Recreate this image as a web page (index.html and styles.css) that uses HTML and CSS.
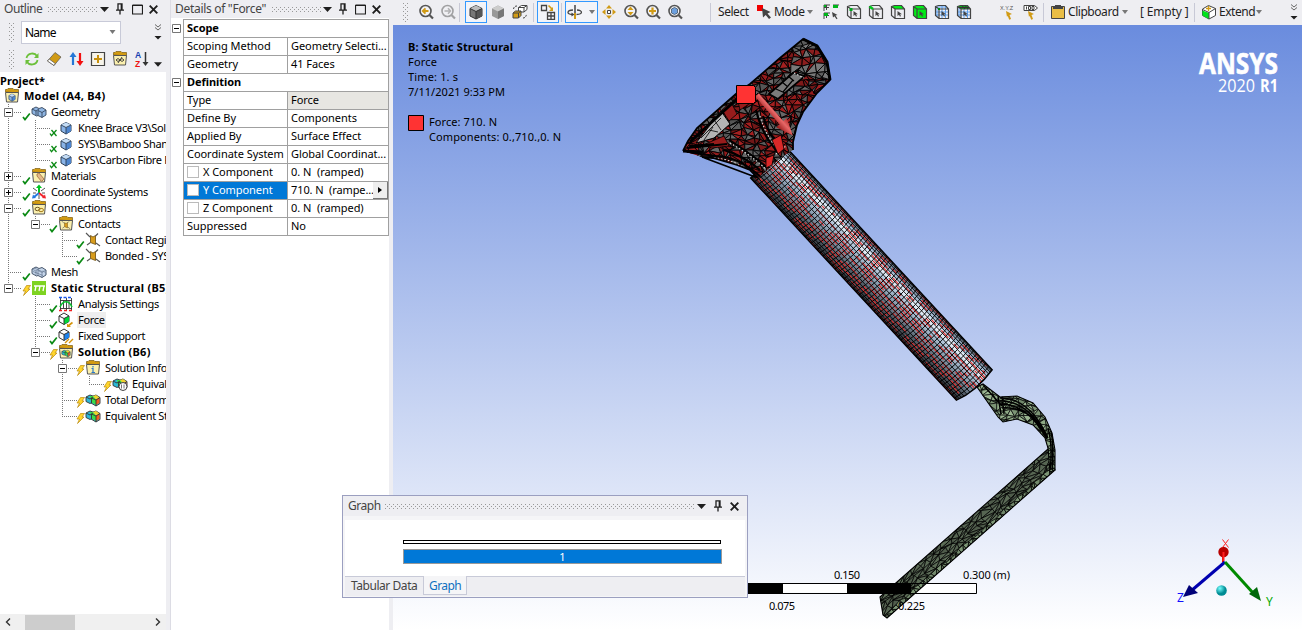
FILE: index.html
```html
<!DOCTYPE html>
<html lang="en">
<head>
<meta charset="utf-8">
<title>Mechanical - Static Structural</title>
<link rel="stylesheet" href="styles.css">
</head>
<body>
<svg class="defs" width="0" height="0">
  <defs>
    <pattern id="dots" width="4" height="4" patternUnits="userSpaceOnUse"><path d="M0 0h1v1h-1zM2 2h1v1h-1z" fill="#999"/></pattern>
    <symbol id="down" viewBox="0 0 9 5"><path d="M0 0h9L4.5 5z" fill="#1e1e1e"/></symbol>
    <symbol id="caret" viewBox="0 0 6 4"><path d="M0 0h6L3 4z" fill="#777"/></symbol>
    <symbol id="pin" viewBox="0 0 8 12"><path d="M2 7V.8h4V7M0 7.2h8M4 7.500v4M5.300 1v6" fill="none" stroke="#1e1e1e" stroke-width="1.300"/></symbol>
    <symbol id="max" viewBox="0 0 11 11"><path d="M.5 1.500h10v8.500H.5zM.5 1h10" fill="none" stroke="#1e1e1e" stroke-width="1.200"/></symbol>
    <symbol id="close" viewBox="0 0 9 9"><path d="M.7.7l7.600 7.600M8.300.7L.7 8.300" stroke="#1e1e1e" stroke-width="1.900"/></symbol>
    <symbol id="more" viewBox="0 0 8 16"><path d="M1 .5l3 2.500 3-2.500M1 3.500l3 2.500 3-2.500" fill="none" stroke="#666" stroke-width="1"/><path d="M.5 12h7l-3.500 3.500z" fill="#1e1e1e"/></symbol>
    <symbol id="minus" viewBox="0 0 9 9"><path d="M.5.5h8v8h-8z" fill="#fff" stroke="#777"/><path d="M2 4.500h5" stroke="#000"/></symbol>
    <symbol id="plus" viewBox="0 0 9 9"><path d="M.5.5h8v8h-8z" fill="#fff" stroke="#777"/><path d="M2 4.500h5M4.500 2v5" stroke="#000"/></symbol>
    <symbol id="tick" viewBox="0 0 9 9"><path d="M1 5l2 2.600L7.800 1.500" fill="none" stroke="#0b8a14" stroke-width="1.700"/></symbol>
    <symbol id="tickx" viewBox="0 0 9 9"><path d="M1 5.500l1.500 2.200L7.500 2M2.500 2l5 6M.8 4" fill="none" stroke="#0b8a14" stroke-width="1.300"/></symbol>
    <symbol id="bolt" viewBox="0 0 9 11"><path d="M4.500.5h4L6 4h2L1.500 10.500 3.500 6H1z" fill="#ffd52b" stroke="#b98a10" stroke-width=".7"/></symbol>
    <symbol id="folder" viewBox="0 0 16 16"><path d="M1.500 4V1.500H3L4 .5h5l1 1h4.500V5z" fill="#d29a10" stroke="#7a5c12" stroke-width=".7"/><path d="M1.500 4.500h13l-1 9.500h-11z" fill="#fbf0ae" stroke="#555" stroke-width="1"/></symbol>
    <symbol id="cube" viewBox="0 0 16 16"><path d="M3 5l5-2.500 5 2.500v6l-5 3-5-3z" fill="#8ab4e8" stroke="#2c3e55"/><path d="M8 8v6l5-3V5z" fill="#4d85cf"/><path d="M3 5l5-2.500L13 5 8 7.500z" fill="#c4dcf5"/><path d="M3 5l5 2.500L13 5M8 7.500V14" fill="none" stroke="#2c3e55" stroke-width=".9"/></symbol>
    <symbol id="cubes" viewBox="0 0 16 16"><path d="M1 5l4-2 3 1.500 3-1 4 2.500v5l-4 2.500-4-2-1.500.5L1 9.500z" fill="#8fb5e2" stroke="#35465c" stroke-width=".9"/><path d="M1 5l4 2 3-2M5 7v4.500M7 6.500l4 2 4-2.500M11 8.500v5M7 6.500v5" fill="none" stroke="#35465c" stroke-width=".9"/></symbol>
    <symbol id="meshi" viewBox="0 0 16 16"><path d="M1 5l4-2 3 1.500 3-1 4 2.500v5l-4 2.500-4-2-1.500.5L1 9.500z" fill="#c5d5ea" stroke="#35465c" stroke-width=".9"/><path d="M1 5l4 2 3-2M5 7v4.500M7 6.500l4 2 4-2.500M11 8.500v5M7 6.500v5M2 7.500l10 4M12 6.500l3 3M3 4l9 4" fill="none" stroke="#586a83" stroke-width=".6"/></symbol>
    <symbol id="csys" viewBox="0 0 16 16"><path d="M8 9V3" stroke="#00c322" stroke-width="2"/><path d="M5 4l3-3.500L11 4z" fill="#00c322"/><path d="M8 9l-5 4" stroke="#2479e0" stroke-width="2"/><path d="M1 14.500l1-4 3 3.500z" fill="#2479e0"/><path d="M8 9l5 4" stroke="#f0242c" stroke-width="2"/><path d="M15 14.500l-1-4-3 3.500z" fill="#f0242c"/><path d="M2 4l4 3M14 4l-4 3M2 9h3M11 9h3M8 11v4" stroke="#555" stroke-width="1"/></symbol>
    <symbol id="contact" viewBox="0 0 16 16"><path d="M5.500 3.500L8 5l2.500-1.500v9L8 11.500l-2.500-1z" fill="#d89c1c" stroke="#6b4b0c" stroke-width=".8"/><path d="M1 1l4 4M15 14l-4-3M13 1.500l-2.500 2.500M5.500 10.500l-3.500 2.500" stroke="#555" stroke-width="1.100"/></symbol>
    <symbol id="static" viewBox="0 0 16 16"><path d="M1 1h14v14H1z" fill="#7ed321"/><path d="M3 6h11M4 11l1-5M8 11l1-5M12 11l1-5" stroke="#fff" stroke-width="1.300" fill="none"/></symbol>
    <symbol id="settings" viewBox="0 0 16 16"><path d="M2.500 2v12M8.500 2v12M13.500 2v12M2 4.500h12M2 12.500h12M5.500 4v8M11 4v8" stroke="#333" stroke-width=".9"/><path d="M2 11c3-7 9-7 12 0" fill="none" stroke="#06bf2b" stroke-width="1.500"/><path d="M1 1.500h13" stroke="#1657f0" stroke-width="1.500" stroke-dasharray="3 1.500"/><path d="M1 14.500h13" stroke="#f02020" stroke-width="1.500" stroke-dasharray="3 2"/></symbol>
    <symbol id="forcei" viewBox="0 0 16 16"><path d="M1 4l5-3 5 3v5.500l-5 3-5-3z" fill="#fff" stroke="#333"/><path d="M6 6.500L11 4v5.500l-5 3z" fill="#00d936"/><path d="M1 4l5 2.500L11 4M6 6.500v6" fill="none" stroke="#333"/><path d="M14.500 10.500L10 14" stroke="#d5950b" stroke-width="1.600"/><path d="M9 11.500V15h4z" fill="#d5950b"/></symbol>
    <symbol id="support" viewBox="0 0 16 16"><path d="M1 4l5-3 5 3v5.500l-5 3-5-3z" fill="#fff" stroke="#333"/><path d="M6 6.500L11 4v5.500l-5 3z" fill="#1d83ee"/><path d="M1 4l5 2.500L11 4M6 6.500v6" fill="none" stroke="#333"/><path d="M7 15l4-4M11 15l4-4" stroke="#d5950b" stroke-width="1.400"/></symbol>
    <symbol id="result" viewBox="0 0 16 16"><path d="M1 5l4-2 3 1 3-1 4 2.500v6l-4 2.500-5-3-1 .5-4-2z" fill="#2bb8d8" stroke="#333" stroke-width=".9"/><path d="M5 4h4l2 4v5l-5-3z" fill="#3bdd46"/><path d="M11 7l3.500-1.500v5.500L11 13z" fill="#f35b20"/><path d="M8 4l3-1 3.500 2.500L11 7.500z" fill="#f2d12b"/><path d="M1 5l4 2 3-2M6.500 6l4.500 2 4-2.500M11 8v6M6.500 6v5" fill="none" stroke="#333" stroke-width=".9"/></symbol>
    <symbol id="glass" viewBox="0 0 16 16"><circle cx="7.500" cy="7" r="5.500" fill="#f3f3f6" stroke="#555" stroke-width="1.600"/><path d="M11.500 11l3.500 3.500" stroke="#555" stroke-width="2.200"/></symbol>
    <symbol id="selcube" viewBox="0 0 16 16"><path d="M1.500 2.500L4.500 1.500h7L14.500 5v9.500H5L1.500 11.500zM1.500 2.500L5 5h9.500M5 5v9.500" fill="none" stroke="#444" stroke-width="1.200"/><path d="M7.500 7v5l1.500-1.300 1 2 1-.7-1-1.700h2z" fill="#444"/></symbol>
    <radialGradient id="cy" cx=".35" cy=".3"><stop offset="0" stop-color="#7ff"/><stop offset="1" stop-color="#008c94"/></radialGradient>
    <linearGradient id="tube" x1="0" y1="0" x2="0" y2="1"><stop offset="0" stop-color="#59636e"/><stop offset=".15" stop-color="#a3bbd4"/><stop offset=".25" stop-color="#f4f9ff"/><stop offset=".36" stop-color="#b4c8dc"/><stop offset=".6" stop-color="#8092a4"/><stop offset=".8" stop-color="#4f5963"/><stop offset="1" stop-color="#2c3035"/></linearGradient>
    <linearGradient id="arrow" x1="0" y1="0" x2="0" y2="1"><stop offset="0" stop-color="#b02626"/><stop offset=".4" stop-color="#e86868"/><stop offset="1" stop-color="#8e1010"/></linearGradient>
    <clipPath id="braceClip"><path d="M683 151l5-10 9-13 40-35 13-9 30-26 23-19 14 7 10 16 3 18-13 13-14 19-6 13-4 17v8l-10 6-25 22-8-8-13-5-24-7-11-1z"/></clipPath>
    <clipPath id="footClip"><path d="M880 597L1048 449 1055 470 887 618 883 615z"/></clipPath>
    <clipPath id="hookClip"><path d="M977 387l6-3 17 13 17-1 16 7 12 14 7 16 3 17v20l-5 2-2-24-3-10-12-13-16-6-14 3-5-5z"/></clipPath>
  </defs>
</svg>

<div class="app">
  <section class="outline">
    <header class="title">
      <span class="title-text outline-name">Outline</span>
      <svg class="dots"><rect width="100%" height="5" fill="url(#dots)"/></svg>
      <svg class="i-down"><use href="#down"/></svg><svg class="i-pin"><use href="#pin"/></svg><svg class="i-max"><use href="#max"/></svg><svg class="i-close"><use href="#close"/></svg>
    </header>
    <div class="filter">
      <svg class="vgrip"><rect width="5" height="19" fill="url(#dots)"/></svg>
      <div class="combo"><span>Name</span><svg class="combo-caret"><use href="#caret"/></svg></div>
      <svg class="i-more"><use href="#more"/></svg>
    </div>
    <div class="tools">
      <svg class="vgrip"><rect width="5" height="19" fill="url(#dots)"/></svg>
      <svg class="ic t1" viewBox="0 0 16 16"><path d="M2.500 7c1-5 8-6 10.500-2M13.500 9c-1 5-8 6-10.500 2" fill="none" stroke="#6cc03a" stroke-width="1.800"/><path d="M14.500 2v5H10zM1.500 14V9H6z" fill="#6cc03a"/></svg>
      <svg class="ic" viewBox="0 0 16 16"><path d="M9 1.500l6 4.500-7 8.500L1.500 10z" fill="#d19b16" stroke="#555" stroke-width=".7"/><path d="M3.200 8l6 4.500-1.200 2L1.500 10z" fill="#fff" stroke="#555" stroke-width=".7"/></svg>
      <svg class="ic" viewBox="0 0 16 16"><path d="M5 14V4" stroke="#2577d6" stroke-width="2.200"/><path d="M1.500 6L5 1l3.500 5z" fill="#2577d6"/><path d="M12 2v10" stroke="#f21010" stroke-width="2.200"/><path d="M8.500 10l3.500 5 3.500-5z" fill="#f21010"/></svg>
      <svg class="ic" viewBox="0 0 16 16"><path d="M1.500 1.500h13v13h-13z" fill="#f7f4ea" stroke="#444" stroke-width="1.200"/><path d="M8 4v8M4 8h8" stroke="#c8900c" stroke-width="2"/></svg>
      <svg class="ic" viewBox="0 0 16 16"><use href="#folder"/><path d="M4 9q2-3 4 0 2-3 4 0-2 3-4 0-2 3-4 0M6 12l4-6" fill="none" stroke="#333" stroke-width=".9"/></svg>
      <svg class="ic" viewBox="0 0 16 16"><text x="1" y="7" class="az" fill="#173fb0">A</text><text x="1" y="15.500" class="az" fill="#ee1111">Z</text><path d="M11.500 1v11" stroke="#333" stroke-width="1.500"/><path d="M8.500 11h6l-3 4z" fill="#333"/></svg>
      <svg class="tool-caret"><use href="#down"/></svg>
    </div>
    <div class="tree">
      <svg class="lines" width="166" height="358"><path d="M8.500 32V216M8 40.500H22M8 104.500H22M8 120.500H22M8 136.500H22M8 200.500H22M8 216.500H22M35.500 48V88M35 56.500H50M35 72.500H50M35 88.500H50M35.500 144V152M35 152.500H50M62.500 160V184M62 168.500H77M62 184.500H77M35.500 224V280M35 232.500H50M35 248.500H50M35 264.500H50M35 280.500H50M62.500 288V344M62 296.500H77M62 328.500H77M62 344.500H77M89.500 304V312M89 312.500H104" fill="none" stroke="#777" stroke-dasharray="1 1"/></svg>
      <div class="row root bold">Project*</div>
      <div class="row model bold"><svg class="ic" viewBox="0 0 16 16"><use href="#folder"/><svg x="3" y="4.500" width="10" height="10"><use href="#cube"/></svg></svg><span>Model (A4, B4)</span></div>
      <div class="row"><svg class="ex"><use href="#minus"/></svg><svg class="mk"><use href="#tick"/></svg><svg class="ic"><use href="#cubes"/></svg><span>Geometry</span></div>
      <div class="row d2"><i class="ex"></i><svg class="mk"><use href="#tickx"/></svg><svg class="ic"><use href="#cube"/></svg><span>Knee Brace V3\Solid</span></div>
      <div class="row d2"><i class="ex"></i><svg class="mk"><use href="#tickx"/></svg><svg class="ic"><use href="#cube"/></svg><span>SYS\Bamboo Shank</span></div>
      <div class="row d2"><i class="ex"></i><svg class="mk"><use href="#tickx"/></svg><svg class="ic"><use href="#cube"/></svg><span>SYS\Carbon Fibre F</span></div>
      <div class="row"><svg class="ex"><use href="#plus"/></svg><svg class="mk"><use href="#tick"/></svg><svg class="ic" viewBox="0 0 16 16"><use href="#folder"/><path d="M6 6l2-1 5 6-2.500 2.500L6 8z" fill="#e3b98b" stroke="#a06d3c" stroke-width=".8"/></svg><span>Materials</span></div>
      <div class="row"><svg class="ex"><use href="#plus"/></svg><svg class="mk"><use href="#tick"/></svg><svg class="ic"><use href="#csys"/></svg><span>Coordinate Systems</span></div>
      <div class="row"><svg class="ex"><use href="#minus"/></svg><svg class="mk"><use href="#tick"/></svg><svg class="ic" viewBox="0 0 16 16"><use href="#folder"/><ellipse cx="6.500" cy="9" rx="2.500" ry="1.700" fill="none" stroke="#6b5420"/><ellipse cx="10" cy="10" rx="2.500" ry="1.700" fill="none" stroke="#a77d1c"/></svg><span>Connections</span></div>
      <div class="row d2"><svg class="ex"><use href="#minus"/></svg><svg class="mk"><use href="#tick"/></svg><svg class="ic" viewBox="0 0 16 16"><use href="#folder"/><svg x="3" y="4.500" width="10" height="9.500"><use href="#contact"/></svg></svg><span>Contacts</span></div>
      <div class="row d3"><i class="ex"></i><svg class="mk"><use href="#tick"/></svg><svg class="ic"><use href="#contact"/></svg><span>Contact Region</span></div>
      <div class="row d3"><i class="ex"></i><svg class="mk"><use href="#tick"/></svg><svg class="ic"><use href="#contact"/></svg><span>Bonded - SYS\</span></div>
      <div class="row"><i class="ex"></i><svg class="mk"><use href="#tick"/></svg><svg class="ic"><use href="#meshi"/></svg><span>Mesh</span></div>
      <div class="row bold"><svg class="ex"><use href="#minus"/></svg><svg class="mk b"><use href="#bolt"/></svg><svg class="ic"><use href="#static"/></svg><span>Static Structural (B5)</span></div>
      <div class="row d2"><i class="ex"></i><svg class="mk"><use href="#tick"/></svg><svg class="ic"><use href="#settings"/></svg><span>Analysis Settings</span></div>
      <div class="row d2"><i class="ex"></i><svg class="mk"><use href="#tick"/></svg><svg class="ic"><use href="#forcei"/></svg><span class="picked">Force</span></div>
      <div class="row d2"><i class="ex"></i><svg class="mk"><use href="#tick"/></svg><svg class="ic"><use href="#support"/></svg><span>Fixed Support</span></div>
      <div class="row d2 bold"><svg class="ex"><use href="#minus"/></svg><svg class="mk b"><use href="#bolt"/></svg><svg class="ic" viewBox="0 0 16 16"><use href="#folder"/><svg x="3" y="4.500" width="10" height="9.500"><use href="#result"/></svg></svg><span>Solution (B6)</span></div>
      <div class="row d3"><svg class="ex"><use href="#minus"/></svg><svg class="mk b"><use href="#bolt"/></svg><svg class="ic" viewBox="0 0 16 16"><use href="#folder"/><path d="M8 6v1.500M6.500 8.500H8V12M6.500 12.500h3.500" fill="none" stroke="#2a78c8" stroke-width="1.200"/></svg><span>Solution Information</span></div>
      <div class="row d4"><i class="ex"></i><svg class="mk b"><use href="#bolt"/></svg><svg class="ic" viewBox="0 0 16 16"><use href="#result"/><circle cx="11" cy="10.500" r="4" fill="#fff" stroke="#444"/><path d="M9.500 8.500v4M12 8.500v4" stroke="#777"/></svg><span>Equivalent</span></div>
      <div class="row d3"><i class="ex"></i><svg class="mk b"><use href="#bolt"/></svg><svg class="ic"><use href="#result"/></svg><span>Total Deformation</span></div>
      <div class="row d3"><i class="ex"></i><svg class="mk b"><use href="#bolt"/></svg><svg class="ic"><use href="#result"/></svg><span>Equivalent Stress</span></div>
    </div>
    <div class="scroll"><svg class="sa" viewBox="0 0 6 8"><path d="M5 .5L1.500 4 5 7.500" fill="none" stroke="#333" stroke-width="1.400"/></svg><div class="thumb"></div><svg class="sa end" viewBox="0 0 6 8"><path d="M1 .5L4.500 4 1 7.500" fill="none" stroke="#333" stroke-width="1.400"/></svg></div>
  </section>

  <section class="details">
    <header class="title">
      <span class="title-text details-name">Details of "Force"</span>
      <svg class="dots"><rect width="100%" height="5" fill="url(#dots)"/></svg>
      <svg class="i-down"><use href="#down"/></svg><svg class="i-pin"><use href="#pin"/></svg><svg class="i-max"><use href="#max"/></svg><svg class="i-close"><use href="#close"/></svg>
    </header>
    <div class="props">
      <div class="marks"><svg class="ex"><use href="#minus"/></svg><svg class="ex second"><use href="#minus"/></svg></div>
      <div class="table">
        <div class="cell head">Scope</div>
        <div class="cell">Scoping Method</div><div class="cell">Geometry Selecti...</div>
        <div class="cell">Geometry</div><div class="cell">41 Faces</div>
        <div class="cell head">Definition</div>
        <div class="cell">Type</div><div class="cell ro">Force</div>
        <div class="cell">Define By</div><div class="cell">Components</div>
        <div class="cell">Applied By</div><div class="cell">Surface Effect</div>
        <div class="cell">Coordinate System</div><div class="cell">Global Coordinat...</div>
        <div class="cell"><b class="check"></b>X Component</div><div class="cell">0. N&nbsp; (ramped)</div>
        <div class="cell active"><b class="check"></b>Y Component</div><div class="cell tight">710. N&nbsp; (rampe...<span class="flyout"><svg viewBox="0 0 4 6"><path d="M0 0l4 3-4 3z"/></svg></span></div>
        <div class="cell"><b class="check"></b>Z Component</div><div class="cell">0. N&nbsp; (ramped)</div>
        <div class="cell">Suppressed</div><div class="cell">No</div>
      </div>
    </div>
  </section>

  <main class="work">
    <nav class="bar">
      <svg class="vgrip m10"><rect width="5" height="19" fill="url(#dots)"/></svg>
      <svg class="ic m10" viewBox="0 0 16 16"><use href="#glass"/><path d="M4.500 7h6M7.500 4.300L4.800 7l2.700 2.700" fill="none" stroke="#d19b16" stroke-width="1.900"/></svg>
      <svg class="ic m6 dim" viewBox="0 0 16 16"><use href="#glass"/><path d="M4.500 7h6M8 4.300L10.500 7 8 9.700" fill="none" stroke="#777" stroke-width="1.500"/></svg>
      <i class="sep m3"></i>
      <span class="tog m5"><svg class="ic" viewBox="0 0 16 16"><path d="M2 4.500l6-3 6 3v7.500l-6 3-6-3z" fill="#777" stroke="#333"/><path d="M2 4.500l6-3 6 3-6 3z" fill="#bbb"/><path d="M8 7.500v7.500l6-3V4.500z" fill="#555"/><path d="M2 4.500l6 3 6-3M8 7.500V15" fill="none" stroke="#333"/></svg></span>
      <svg class="ic m3" viewBox="0 0 16 16"><path d="M2 4.500l6-3 6 3v7.500l-6 3-6-3z" fill="#999"/><path d="M2 4.500l6-3 6 3-6 3z" fill="#ccc"/><path d="M8 7.500v7.500l6-3V4.500z" fill="#777"/></svg>
      <svg class="ic m6" viewBox="0 0 16 16"><path d="M6.500 3.500l3-2H15v4l-3 2.500H6.500zM6.500 3.500H12V8M12 3.500l3-2" fill="#fff" stroke="#444"/><path d="M1 9l2.500-2H9v4.500L6.500 14H1z" fill="#d19b16" stroke="#444"/><path d="M1 9h5.500v5M6.500 9L9 7" fill="none" stroke="#444"/><path d="M1.500 5Q2 2 5 2M11 14q3 0 3.500-4" fill="none" stroke="#444" stroke-dasharray="2 1"/></svg>
      <i class="sep m5"></i>
      <span class="tog m3"><svg class="ic" viewBox="0 0 16 16"><path d="M1.500 1.500h5v5h-5zM7.500 8.500h7v7h-7zM11 8.500v7M7.500 12h7" fill="none" stroke="#444" stroke-width="1.300"/><path d="M8.500 1.500L12 5" stroke="#d19b16" stroke-width="1.600"/><path d="M13 3v4H9z" fill="#d19b16"/></svg></span>
      <i class="sep m2"></i>
      <span class="tog wide m3"><svg class="ic" viewBox="0 0 16 16"><path d="M10 6c6 .2 6 4.200-.5 4.500M6 6c-6.500.2-6.500 4.200-1 4.500" fill="none" stroke="#444" stroke-width="1.300"/><path d="M8 1v8" stroke="#444" stroke-width="1.500"/><path d="M8 9v6" stroke="#d19b16" stroke-width="2"/><path d="M4.500 8.500l3 2-3 2z" fill="#444"/></svg><svg class="caret"><use href="#caret"/></svg></span>
      <svg class="ic m3" viewBox="0 0 16 16"><path d="M8 1l3 3.500H5zM8 15l3-3.500H5zM1 8l3.500-3v6zM15 8l-3.500-3v6z" fill="#d19b16"/><path d="M6.500 6.500h3v3h-3z" fill="#fff" stroke="#444"/></svg>
      <svg class="ic m6" viewBox="0 0 16 16"><use href="#glass"/><path d="M7.500 2.500l3 3.500h-6zM7.500 11.500l3-3.500h-6z" fill="#d19b16"/></svg>
      <svg class="ic m6" viewBox="0 0 16 16"><use href="#glass"/><path d="M7.500 3.500v7M4 7h7" stroke="#d19b16" stroke-width="2.200"/></svg>
      <svg class="ic m6" viewBox="0 0 16 16"><use href="#glass"/><path d="M4.500 5l3-1.500 3 1.500v4l-3 1.500-3-1.500z" fill="#6da0df" stroke="#456" stroke-width=".8"/></svg>
      <i class="sep m27"></i>
      <span class="lab m7 w32">Select</span>
      <svg class="ic m6" viewBox="0 0 16 16"><path d="M1 1h6v6H1z" fill="#f10000"/><path d="M6 4l8.500 4-3 1.500 3.500 4-2 1.500-3.300-4L7 13.500z" fill="#444"/></svg>
      <span class="lab m2 w32">Mode</span><svg class="caret m1"><use href="#caret"/></svg>
      <svg class="ic m10" viewBox="0 0 16 16"><path d="M1 7V1h6M1 3.500h5M3.500 1v5M10 1h6M10 3.500h5M1 15V9h6M1 11.500h5M3.500 9v5" fill="none" stroke="#444"/><path d="M1 1h2v2H1zM10 1h5v3h-5zM1 9h4v3H1z" fill="#00b51a"/><path d="M9 8l5.500 3-2 .5 2 3-1 .7-2-3L10 13.500z" fill="#444"/></svg>
      <svg class="ic m7" viewBox="0 0 16 16"><use href="#selcube"/><path d="M3.500 4h3v3h-3z" fill="#00a81c"/></svg>
      <svg class="ic m6" viewBox="0 0 16 16"><use href="#selcube"/><path d="M1.500 2.500L5 5" stroke="#00c81d" stroke-width="2.500"/></svg>
      <svg class="ic m6" viewBox="0 0 16 16"><path d="M1.500 2.500l3-1h7L14.500 5H5z" fill="#00ed16"/><use href="#selcube"/></svg>
      <svg class="ic m6" viewBox="0 0 16 16"><path d="M1.500 2.500l3-1h7L14.500 5v9.500H5l-3.500-3z" fill="#00ed16"/><use href="#selcube"/></svg>
      <svg class="ic m6" viewBox="0 0 16 16"><path d="M2 8h13M2 11h13M4 3h9M8 1v14M11.500 1v14M3 2v11" stroke="#5da0f0"/><use href="#selcube"/><path d="M4 4h2v2H4z" fill="#008c10"/></svg>
      <svg class="ic m6" viewBox="0 0 16 16"><path d="M2 8h13M2 11h13M8 5v10M11.500 5v10M3 3v10" stroke="#5da0f0"/><path d="M1.500 2.500l3-1h7L14.500 5H5z" fill="#08ad1b"/><use href="#selcube"/><path d="M6 1.500L9 5M9 1.500L12 5M3 3.500h10" stroke="#333"/></svg>
      <svg class="ic m28" viewBox="0 0 16 16"><text x="0" y="6" class="xyz">X.Y.Z</text><path d="M6 7l6 3-2.500 1 1.500 4-1.800.7-1.500-4L7 13z" fill="#d19b16"/></svg>
      <svg class="ic m7" viewBox="0 0 16 16"><path d="M1 1.500h10.500L14.500 4l-3 2.500H1zM3.500 2.500v3M5.500 2.500h2v3h-2zM9 2.500h2v3H9z" fill="#fff" stroke="#444"/><path d="M5 7l6 3-2.500 1 1.500 4-1.800.7-1.500-4L6 13z" fill="#d19b16"/></svg>
      <i class="sep m4"></i>
      <svg class="ic m6" viewBox="0 0 16 16"><path d="M1.500 2.500h13v12h-13z" fill="#e9bd45" stroke="#444"/><path d="M5 1h6v1.500h2V5H3V2.500h2z" fill="#444"/></svg>
      <span class="lab m2 w53">Clipboard</span><svg class="caret m1"><use href="#caret"/></svg>
      <span class="lab empty m12 w48">[ Empty ]</span>
      <i class="sep m6"></i>
      <svg class="ic m6" viewBox="0 0 16 16"><path d="M1.500 5l6-3.500 7 3v7L8 15l-6.500-3.500z" fill="#fff" stroke="#444"/><path d="M1.500 6.500L8 9v6l-6.500-3.500z" fill="#00e31a"/><path d="M1.500 5.500L8 8.500l6.500-4M8 8.500V15" fill="none" stroke="#444"/><path d="M7.500 2v5M5 4.500h5" stroke="#d19b16" stroke-width="1.300"/></svg>
      <span class="lab m2 w36">Extend</span><svg class="caret m1"><use href="#caret"/></svg>
      <svg class="i-more m28"><use href="#more"/></svg>
    </nav>
    <svg class="view" viewBox="393 25 909 605">
      <g class="note">
        <text x="408" y="51" class="strong" textLength="105">B: Static Structural</text>
        <text x="408" y="66" textLength="29">Force</text>
        <text x="408" y="81" textLength="50">Time: 1. s</text>
        <text x="408" y="96" textLength="97">7/11/2021 9:33 PM</text>
        <text x="429" y="126" textLength="68">Force: 710. N</text>
        <text x="429" y="141" textLength="132">Components: 0.,710.,0. N</text>
      </g>
      <path d="M408.500 115.500h15v15h-15z" fill="#ff3333" stroke="#000"/>
      <text x="1199" y="74" class="brand" textLength="79" lengthAdjust="spacingAndGlyphs">ANSYS</text>
      <text x="1218" y="92" class="release" textLength="37" lengthAdjust="spacingAndGlyphs">2020</text>
      <text x="1260" y="92" class="release heavy" textLength="18" lengthAdjust="spacingAndGlyphs">R1</text>
      <path d="M783 583.500h64v9h-64zM911 583.500h65.500v9H911z" fill="#fff"/>
      <g id="model"></g>
      <path d="M740 583h43v11h-43zM847 583h64v11h-64z"/>
      <path d="M911 583.500h65.500v10H911M783 583.500h64M783 593.500h64" fill="none" stroke="#000"/>
      <g class="note">
        <text x="834" y="579" textLength="26">0.150</text><text x="963" y="579" textLength="47">0.300 (m)</text>
        <text x="769" y="610" textLength="26">0.075</text><text x="898" y="610" textLength="27">0.225</text>
      </g>
      <path d="M1223 547v15" stroke="#e00" stroke-width="2"/><circle cx="1223.500" cy="552" r="5.200" fill="#b80000"/><path d="M1223.500 552v9" stroke="#f22" stroke-width="2"/>
      <path d="M1225 562l-34 29" stroke="#0000b0" stroke-width="3"/><path d="M1183 597l6-12 9 8z" fill="#000078"/>
      <path d="M1225 562l29 32" stroke="#008a00" stroke-width="3"/><path d="M1261 601l-12-7 8-7z" fill="#00680a"/>
      <circle cx="1221.500" cy="590.500" r="5.300" fill="url(#cy)"/>
      <path d="M1222.500 539.500l6 8M1228.500 539.500l-6 8" stroke="#f22"/>
      <g class="axis"><text x="1177" y="602" fill="#11f">Z</text><text x="1266" y="606" fill="#0a0">Y</text></g>
    </svg>
  </main>

  <aside class="graph">
    <header class="title">
      <span class="title-text graph-name">Graph</span>
      <svg class="dots"><rect width="100%" height="5" fill="url(#dots)"/></svg>
      <svg class="i-down"><use href="#down"/></svg><svg class="i-pin"><use href="#pin"/></svg><svg class="i-close"><use href="#close"/></svg>
    </header>
    <div class="plot"><div class="track"></div><div class="step">1</div></div>
    <div class="tabs"><span class="tab">Tabular Data</span><span class="tab on">Graph</span></div>
  </aside>
</div>
<script src="model.js"></script>
</body>
</html>
```
FILE: styles.css
```css
* { box-sizing: border-box; }
body { margin: 0; width: 1302px; height: 630px; overflow: hidden; background: #eeeef2; font-family: "Noto Sans", "Open Sans", sans-serif; font-size: 11px; color: #000; }
svg { display: block; flex: none; }
.defs { position: absolute; }
.app { display: flex; width: 1302px; height: 630px; }
.outline { display: flex; flex-direction: column; width: 166px; overflow: hidden; flex: none; }
.details { width: 219px; margin-left: 4px; background: #fff; flex: none; border-left: 1px solid #dcdce4; }
.work { width: 909px; margin-left: 4px; display: flex; flex-direction: column; flex: none; }

.title { display: flex; align-items: center; height: 18px; background: #eeeef2; color: #444; font-size: 12px; flex: none; white-space: nowrap; }
.title-text { flex: none; height: 17px; line-height: 16px; }
.outline-name { width: 44px; padding-left: 4px; letter-spacing: -.45px; }
.details-name { width: 97px; padding-left: 4px; letter-spacing: -.3px; }
.dots { flex: 1; min-width: 0; height: 5px; margin-left: 4px; }
.i-down { width: 9px; height: 5px; margin-left: 2px; }
.i-pin { width: 8px; height: 12px; margin-left: 7px; }
.i-max { width: 11px; height: 11px; margin-left: 8px; }
.i-close { width: 9px; height: 9px; margin: 0 8px 0 6px; }
.i-more { width: 8px; height: 16px; }
.vgrip { width: 5px; height: 19px; }
.ic { width: 16px; height: 16px; }

.filter { display: flex; align-items: center; height: 28px; padding-left: 9px; flex: none; }
.combo { display: flex; align-items: center; justify-content: space-between; width: 100px; height: 23px; margin: 0 33px 0 7px; padding: 0 4px 0 3px; background: #fff; border: 1px solid #c8cad8; font-size: 12px; letter-spacing: -.8px; }
.combo-caret { width: 7px; height: 4px; }
.tools { display: flex; align-items: center; height: 26px; padding-left: 9px; gap: 6px; flex: none; }
.t1 { margin-left: 4px; }
.tool-caret { width: 8px; height: 5px; margin: 11px 0 0 -2px; }
.az { font: bold 8.500px "Liberation Sans", sans-serif; }

.tree { position: relative; flex: 1; background: #fff; letter-spacing: -.33px; }
.lines { position: absolute; left: 0; top: 0; }
.row { position: relative; display: flex; align-items: center; height: 16px; padding-left: 4px; white-space: nowrap; }
.bold { font-weight: bold; letter-spacing: .25px; }
.root { padding-left: 0; letter-spacing: .05px; }
.row .ic + span { margin-left: 3px; height: 16px; line-height: 16px; padding: 0 1px; }
.d2 { padding-left: 31px; }
.d3 { padding-left: 58px; }
.d4 { padding-left: 85px; }
.ex { width: 9px; height: 9px; flex: none; }
.mk { width: 9px; height: 9px; margin: 8px 0 0 9px; }
.b { height: 11px; margin-top: 5px; }
.row .picked { background: #eee; }
.scroll { display: flex; align-items: center; height: 16px; background: #f0f0f0; padding: 0 5px; flex: none; }
.sa { width: 6px; height: 8px; }
.end { margin-left: auto; }
.thumb { width: 50px; height: 15px; margin-left: 14px; background: #cdcdcd; }

.props { display: flex; padding: 1px 0 0 1px; }
.marks { width: 11px; padding-top: 5px; }
.second { margin-top: 45px; }
.table { display: grid; grid-template-columns: 104px 101px; border: solid #a0a0a0; border-width: 1px 0 0 1px; }
.cell { display: flex; align-items: center; position: relative; height: 18px; padding: 0 0 2px 3px; border: solid #a0a0a0; border-width: 0 1px 1px 0; white-space: nowrap; overflow: hidden; letter-spacing: -.05px; }
.tight { letter-spacing: -.1px; }
.head { grid-column: span 2; font-weight: bold; }
.ro { background: #e7e6e2; }
.check { width: 12px; height: 12px; margin: 1px 4px 0 0; border: 1px solid #bbb; background: #fff; }
.active { background: #0078d7; color: #fff; }
.flyout { position: absolute; right: 0; top: 0; display: flex; align-items: center; justify-content: center; width: 15px; height: 17px; background: #eee; border: solid #777; border-width: 0 1px 1px 0; }
.flyout svg { width: 4px; height: 6px; }

.bar { display: flex; align-items: center; height: 25px; padding-bottom: 1px; background: #eeeef2; font-size: 12px; flex: none; }
.dim { opacity: .5; }
.sep { width: 1px; height: 19px; background: #c8c9d6; flex: none; }
.tog { display: flex; align-items: center; justify-content: center; width: 22px; height: 22px; border: 1px solid #3399ff; background: #f3f4f8; flex: none; }
.wide { width: 33px; justify-content: space-between; padding: 0 2px 0 1px; }
.caret { width: 6px; height: 4px; }
.lab { flex: none; white-space: nowrap; letter-spacing: -.45px; line-height: 16px; color: #1e1e1e; }
.empty { letter-spacing: -.15px; }
.w32 { width: 32px; } .w36 { width: 36px; } .w48 { width: 48px; } .w53 { width: 53px; }
.m1 { margin-left: 1px; } .m2 { margin-left: 2px; } .m3 { margin-left: 3px; } .m4 { margin-left: 4px; } .m5 { margin-left: 5px; }
.m6 { margin-left: 6px; } .m7 { margin-left: 7px; } .m10 { margin-left: 10px; } .m12 { margin-left: 12px; }
.m27 { margin-left: 27px; } .m28 { margin-left: 28px; }
.xyz { font: 5.500px "Liberation Sans", sans-serif; fill: #555; }

.view { width: 909px; height: 605px; background: linear-gradient(#6a8cde, #fff); }
.note { font-size: 11px; }
.strong { font-weight: bold; }
.brand { font: bold 29px "Open Sans", sans-serif; fill: #fff; stroke: #fff; stroke-width: .6px; }
.release { font: 18px "Open Sans", sans-serif; fill: #fff; }
.heavy { font-weight: bold; }
.axis { font: 12px "Noto Sans", sans-serif; }

.graph { position: absolute; left: 342px; top: 495px; width: 406px; height: 103px; padding: 0 2px 2px; border: 1px solid #9b9fc0; background: #f5f5f7; }
.graph .title { height: 20px; margin: 0 -2px; }
.graph-name { width: 38px; padding-left: 5px; letter-spacing: -.45px; }
.graph .i-close { margin-left: 8px; }
.graph .i-down { margin-left: 3px; }
.graph .i-pin { margin-left: 8px; }
.plot { height: 56px; margin-top: 4px; padding: 20px 23px 0 58px; background: #fff; }
.track { height: 4px; border: 1px solid #000; width: 318px; }
.step { width: 319px; height: 15px; margin-top: 5px; border: 1px solid #999; background: #0078d7; color: #fff; line-height: 13px; text-align: center; }
.tabs { display: flex; height: 20px; border-top: 1px solid #c8cad8; background: #eeeef2; font-size: 12px; line-height: 17px; color: #444; }
.tab { width: 78px; padding-left: 6px; letter-spacing: -.45px; white-space: nowrap; }
.on { width: 44px; height: 19px; margin-top: -1px; padding: 1px 0 0 5px; border: solid #c8cad8; border-width: 0 1px 1px; background: #f5f5f7; color: #0e70c0; letter-spacing: -.55px; }
```
FILE: model.js
```js
// Builds the finite element mesh drawn in the graphics window.
const NS = "http://www.w3.org/2000/svg";
const model = document.getElementById("model");
let seed = 7;
function rnd() {
  seed = (seed * 16807) % 2147483647;
  return seed / 2147483647;
}
function add(parent, tag, attrs) {
  const el = document.createElementNS(NS, tag);
  for (const k in attrs) el.setAttribute(k, attrs[k]);
  parent.appendChild(el);
  return el;
}

// Jittered triangle mesh over a rectangle; a clip path trims it to the part.
function triangles(parent, w, h, sx, sy, jitter, pick, line) {
  const pts = [];
  for (let y = 0; y <= h; y += sy) {
    const r = [];
    for (let x = 0; x <= w; x += sx) r.push([x + (rnd() - .5) * sx * jitter, y + (rnd() - .5) * sy * jitter]);
    pts.push(r);
  }
  for (let j = 0; j < pts.length - 1; j++) {
    for (let i = 0; i < pts[j].length - 1; i++) {
      const a = pts[j][i], b = pts[j][i + 1], c = pts[j + 1][i + 1], d = pts[j + 1][i];
      const pair = rnd() > .5 ? [[a, b, c], [a, c, d]] : [[a, b, d], [b, c, d]];
      pair.forEach(t => add(parent, "path", {
        d: "M" + t.map(p => p[0].toFixed(1) + " " + p[1].toFixed(1)).join("L") + "z",
        fill: pick(), stroke: "#000", "stroke-width": line
      }));
    }
  }
}
const from = list => () => list[Math.floor(rnd() * list.length)];

// Foot plate
const foot = add(model, "g", { "clip-path": "url(#footClip)" });
const plate = add(foot, "g", { transform: "translate(862 606) rotate(-41.4)" });
triangles(plate, 275, 36, 10, 4.2, .6, from(["#566552", "#5c6c57", "#4f5c4b"]), .7);
const rim = add(foot, "g", { transform: "translate(887 613) rotate(-41.4)" });
triangles(rim, 240, 14, 6, 7, .4, from(["#7c9575", "#71886b"]), .7);
add(model, "path", { d: "M880 597L1048 449 1055 470 887 618 883 615z", fill: "none", stroke: "#000", "stroke-width": 1.1 });

// Curved ankle strap
const hook = add(model, "g", { "clip-path": "url(#hookClip)" });
const strap = add(hook, "g", { transform: "translate(970 380)" });
triangles(strap, 96, 96, 7, 5, .8, from(["#8faa86", "#7c9575", "#9bb691", "#6f8769"]), .7);
add(hook, "path", { d: "M998 396l3 18M1002 396l2 18M1000 398q30 0 48 40M1000 401q30 0 47 38M1000 404q28 0 46 34M1002 408q28-2 44 27M984 386l18 20M1048 428q5 18 2 42M1051 430q3 16 1 40", fill: "none", stroke: "#000", "stroke-width": 1.5 });
add(model, "path", { d: "M977 387l6-3 17 13 17-1 16 7 12 14 7 16 3 17v20l-5 2-2-24-3-10-12-13-16-6-14 3-5-5z", fill: "none", stroke: "#000", "stroke-width": 1.1 });

// Tube
const tube = add(model, "g", { transform: "translate(785 146) rotate(47.2)" });
const L = 305, W = 47;
const outline = "M0 0H" + L + "Q" + (L + 5) + " 26 " + (L - 2) + " " + W + "H0z";
const clip = add(tube, "clipPath", { id: "tubeClip" });
add(clip, "path", { d: outline });
add(tube, "path", { d: outline, fill: "url(#tube)" });
const skin = add(tube, "g", { "clip-path": "url(#tubeClip)" });
let red = "", rings = "", rods = "";
for (let i = 0; i < 640; i++) {
  const v = Math.floor(rnd() * 16) * 3 + 1.5;
  if (v > 11 && v < 15 && rnd() > .4) continue;
  red += "M" + (rnd() * L).toFixed(1) + " " + v + "h" + (3 + rnd() * 7).toFixed(1);
}
for (let u = 1; u < L + 6; u += 4.4) rings += "M" + u.toFixed(1) + " 0q4 24 0 " + W;
for (let k = 0; k <= 18; k++) rods += "M0 " + (W / 2 * (1 - Math.cos(Math.PI * k / 18))).toFixed(2) + "h" + (L + 6);
add(skin, "path", { d: red, stroke: "#e02c2c", "stroke-width": 1.1, fill: "none" });
add(skin, "path", { d: rings, stroke: "#000", "stroke-width": .9, fill: "none" });
add(skin, "path", { d: rods, stroke: "#000", "stroke-width": .8, fill: "none" });
add(tube, "path", { d: outline, fill: "none", stroke: "#000", "stroke-width": 1.3 });

// Knee brace socket
const brace = add(model, "g", { "clip-path": "url(#braceClip)" });
const shell = add(brace, "g", { transform: "translate(672 150) rotate(-42)" });
const lower = add(brace, "g", { transform: "translate(676 30)" });
triangles(lower, 162, 162, 7, 5.5, .9, from(["#951b1b", "#7e1919", "#555", "#686868", "#a42020", "#5c5c5c", "#701717"]), .9);
const upper = add(shell, "g", { transform: "translate(70 0)" });
triangles(upper, 130, 26, 10, 8, .6, from(["#9c1f1f", "#777", "#6a6a6a", "#8d1d1d", "#606060"]), .9);
const cap = add(brace, "g", { transform: "translate(792 44)" });
triangles(cap, 40, 35, 8, 7, .7, from(["#6f6f6f", "#606060", "#7a7a7a", "#8b1d1d"]), .9);
add(brace, "path", { d: "M696 143l25-32 9 13-16 14z", fill: "#b4b4b4", stroke: "#000", "stroke-width": 1 });
add(brace, "path", { d: "M701 138l20-20M709 130l9 2M704 140l9-13M715 121l6 9", fill: "none", stroke: "#000", "stroke-width": .8 });
add(brace, "path", { d: "M722 110l9-8 6 12-8 7zM737 97l10-5 5 10-12 8zM703 145l21-9 5 10-17 2z", fill: "#981c1c", stroke: "#000", "stroke-width": .8 });
add(brace, "path", { d: "M769 94l24-21 12 3-27 23z", fill: "#7b7b7b", stroke: "#000", "stroke-width": 1.8 });
add(brace, "path", { d: "M776 89l9 4M782 82l6 5M788 76l6 5M783 92l10-12M795 71l29 9", fill: "none", stroke: "#000", "stroke-width": 1.200 });
add(brace, "path", { d: "M716 156q22 0 46 22M729 140q16 10 38 28M756 110q6 25 22 42M763 116q5 18 19 34M690 146l24-2M686 152l30 4M687 148l40-4M724 150q20 6 36 20", fill: "none", stroke: "#000", "stroke-width": 2.2 });
add(brace, "path", { d: "M714 158q20 1 36 14M730 143q18 10 36 26M760 116q5 18 18 34M794 73l10 5M776 154l10-8", fill: "none", stroke: "#ddd", "stroke-width": 1.1, "stroke-dasharray": "1.500 2" });
add(brace, "path", { d: "M772 140l9-5 3 14-6 5zM766 158l8-3-2 10-6 3z", fill: "#d92828", stroke: "#000", "stroke-width": .8 });
add(model, "path", { d: "M683 151l5-10 9-13 40-35 13-9 30-26 23-19 14 7 10 16 3 18-13 13-14 19-6 13-4 17v8M758 178l-8-8-13-5-24-7-11-1z", fill: "none", stroke: "#000", "stroke-width": 1.8 });
add(model, "path", { d: "M803 39l14 7 10 16 3 18M690 142l48-44M683 151l20 1", fill: "none", stroke: "#000", "stroke-width": 3 });

// Force arrow and its tag
const arrow = add(model, "g", { transform: "translate(757 95) rotate(48.5)" });
add(arrow, "path", { d: "M0-2.500H37V-7L54 0 37 7V2.500H0z", fill: "url(#arrow)" });
add(model, "path", { d: "M736.500 85.500h17l2 2v14l-2 2h-17z", fill: "#ff3333", stroke: "#000" });
```
